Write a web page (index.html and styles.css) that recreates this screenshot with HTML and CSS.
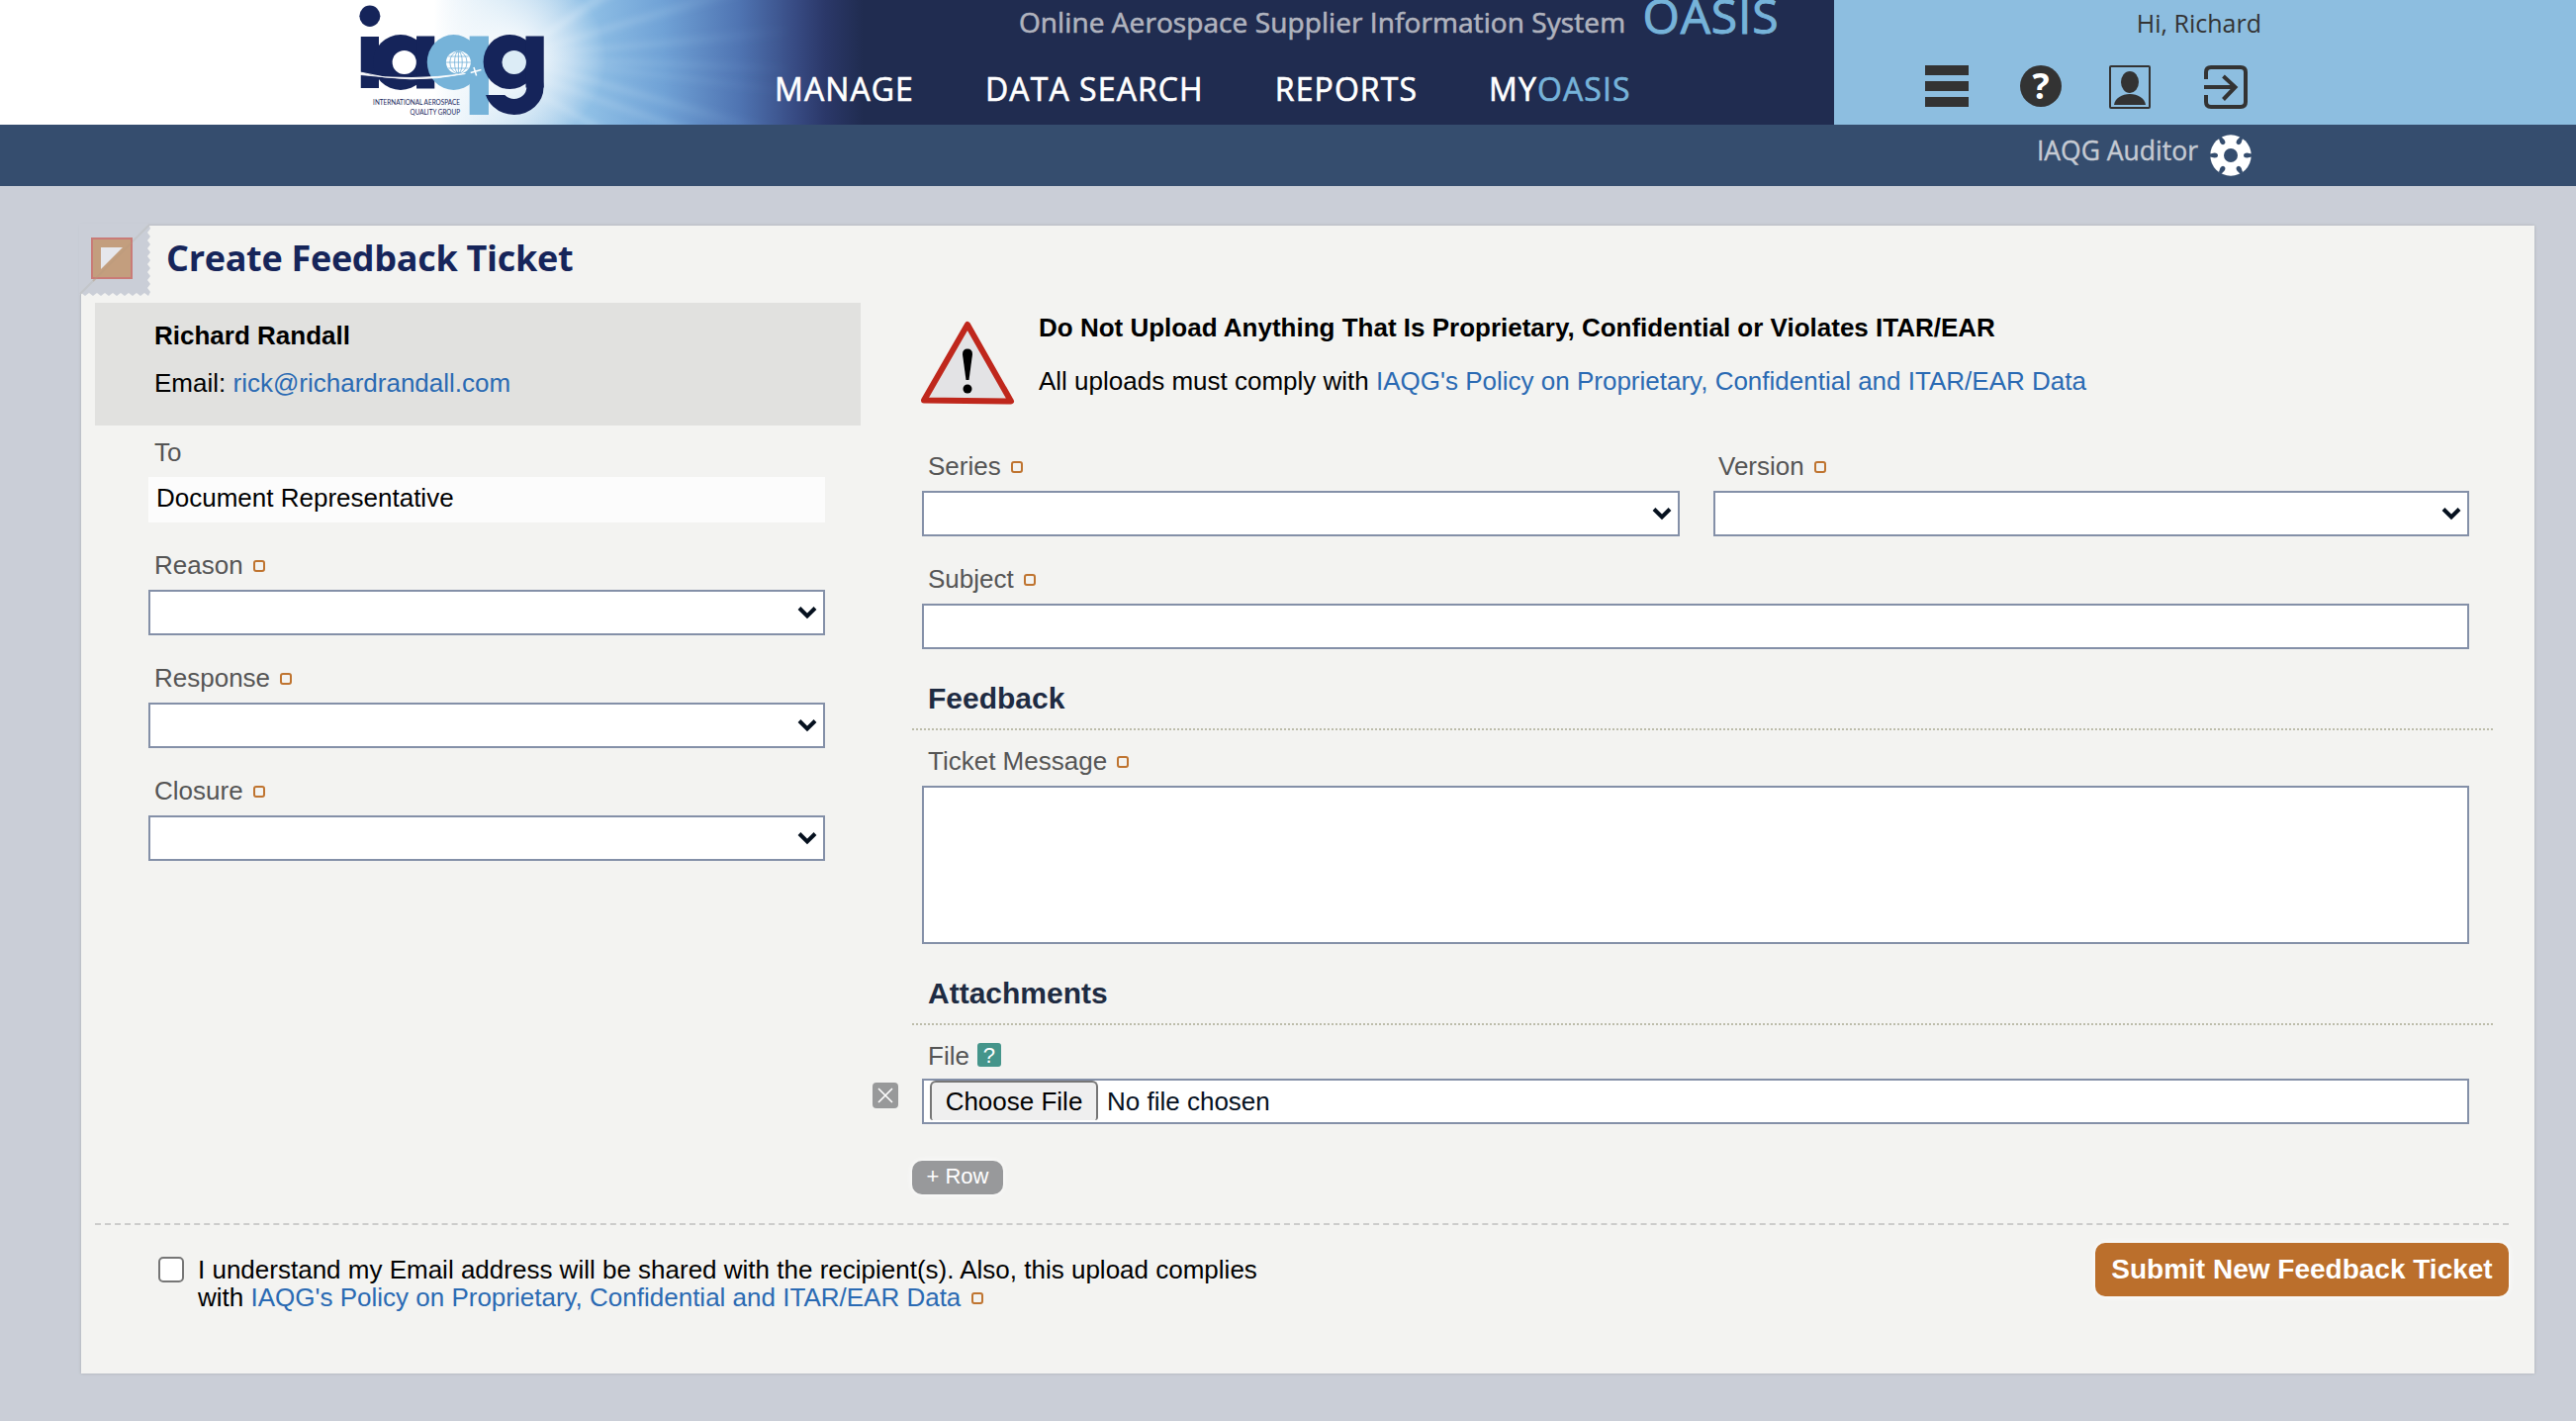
FILE: index.html
```html
<!DOCTYPE html>
<html lang="en">
<head>
    <meta charset="UTF-8">
    <meta name="viewport" content="width=device-width, initial-scale=1.0">
    <title>OASIS - Create Feedback Ticket</title>
    <link rel="stylesheet" href="styles.css">
</head>
<body>
    <header class="top">
        <!-- Sunburst behind the logo -->
        <svg class="glow" width="964" height="126" viewBox="0 0 900 126" preserveAspectRatio="none">
            <defs>
                <linearGradient id="sky" x1="0" x2="900" y1="0" y2="0" gradientUnits="userSpaceOnUse">
                    <stop offset="0.48" stop-color="#ffffff"/>
                    <stop offset="0.55" stop-color="#cfe5f4"/>
                    <stop offset="0.64" stop-color="#90c0e6"/>
                    <stop offset="0.72" stop-color="#70a2d6"/>
                    <stop offset="0.80" stop-color="#4f74b2"/>
                    <stop offset="0.86" stop-color="#374a82"/>
                    <stop offset="0.89" stop-color="#2b3869"/>
                    <stop offset="0.93" stop-color="#202c50"/>
                </linearGradient>
                <radialGradient id="sun" cx="505" cy="58" r="90" gradientUnits="userSpaceOnUse">
                    <stop offset="0" stop-color="#fff"/>
                    <stop offset="0.4" stop-color="#fff" stop-opacity="0.6"/>
                    <stop offset="1" stop-color="#fff" stop-opacity="0"/>
                </radialGradient>
                <linearGradient id="ray" x1="520" x2="770" y1="0" y2="0" gradientUnits="userSpaceOnUse">
                    <stop offset="0" stop-color="#fff" stop-opacity="0.35"/>
                    <stop offset="1" stop-color="#7ab4e0" stop-opacity="0"/>
                </linearGradient>
                <filter id="soft" x="-10%" y="-10%" width="120%" height="120%"><feGaussianBlur stdDeviation="3"/></filter>
            </defs>
            <rect width="900" height="126" fill="url(#sky)"/>
            <g fill="url(#ray)" filter="url(#soft)">
                <polygon points="505,58 800,22 800,34"/>
                <polygon points="505,58 700,-10 740,-10"/>
                <polygon points="505,58 590,-10 610,-10"/>
                <polygon points="505,58 800,66 800,76"/>
                <polygon points="505,58 800,92 800,100"/>
                <polygon points="505,58 760,130 720,130"/>
                <polygon points="505,70 690,134 665,134"/>
                <polygon points="505,80 595,130 583,130"/>
            </g>
            <rect width="900" height="126" fill="url(#sun)"/>
        </svg>
        <div class="logo">
            <svg width="193" height="126" viewBox="20 0 180 126" preserveAspectRatio="none">
                <defs>
                    <clipPath id="hook"><polygon points="138,96 168,96 168,80 197,80 197,118 138,118"/></clipPath>
                </defs>
                <g fill="#15245a">
                    <ellipse cx="32" cy="16.3" rx="9.8" ry="10.7"/>
                    <rect x="23.5" y="37" width="17" height="52"/>
                    <ellipse cx="61" cy="63" rx="26" ry="28"/>
                    <rect x="76" y="36.5" width="17" height="53"/>
                </g>
                <ellipse cx="64.5" cy="63" rx="11.3" ry="12" fill="#fff"/>
                <g fill="#76b3d9">
                    <ellipse cx="111" cy="63" rx="25" ry="28"/>
                    <rect x="126" y="36.5" width="18" height="79.5"/>
                </g>
                <g fill="#15245a">
                    <ellipse cx="164" cy="62.5" rx="25" ry="27.5"/>
                    <rect x="179" y="36.5" width="17" height="52"/>
                </g>
                <ellipse cx="168" cy="88" rx="19.8" ry="20" fill="none" stroke="#15245a" stroke-width="16" clip-path="url(#hook)"/>
                <ellipse cx="168" cy="63" rx="11.4" ry="12" fill="#dcecf6"/>
                <!-- globe -->
                <circle cx="115.5" cy="63" r="11.6" fill="#fff"/>
                <g fill="none" stroke="#76b3d9" stroke-width="0.8">
                    <ellipse cx="115.5" cy="63" rx="8" ry="11"/>
                    <ellipse cx="115.5" cy="63" rx="3.6" ry="11"/>
                    <line x1="115.5" y1="52" x2="115.5" y2="74"/>
                    <line x1="104" y1="63" x2="127" y2="63"/>
                    <line x1="106" y1="57" x2="125" y2="57"/>
                    <line x1="106" y1="69" x2="125" y2="69"/>
                </g>
                <!-- flight path and plane -->
                <path d="M23 73 Q68 86 122 74.5 Q70 82 23 75.5Z" fill="#fff" stroke="#fff" stroke-width="0.8"/>
                <path d="M127 73.5 L137 70.5 M130 68 L132.5 76.5" stroke="#fff" stroke-width="1.4"/>
                <g class="logo-text" fill="#15245a" text-anchor="end">
                    <text x="117" y="106" textLength="82" lengthAdjust="spacingAndGlyphs">INTERNATIONAL AEROSPACE</text>
                    <text x="117" y="115.7" textLength="47" lengthAdjust="spacingAndGlyphs">QUALITY GROUP</text>
                </g>
            </svg>
        </div>
        <div class="brand">
            <div class="tagline">Online Aerospace Supplier Information System <span class="oasis">OASIS</span></div>
            <nav>
                <a>MANAGE</a>
                <a>DATA SEARCH</a>
                <a>REPORTS</a>
                <a>MY<span class="blue">OASIS</span></a>
            </nav>
        </div>
        <div class="user">
            <div class="hi">Hi, Richard</div>
            <div class="icons">
                <svg width="44" height="44" viewBox="0 0 44 44" fill="#333"><path d="M0 0H44V10H0zM0 16H44V26H0zM0 32H44V42H0z"/></svg>
                <span class="help-circle">?</span>
                <svg width="42" height="44" viewBox="0 0 42 44" fill="#333">
                    <rect x="1" y="1" width="40" height="42" rx="1" fill="none" stroke="#333" stroke-width="2"/>
                    <ellipse cx="21" cy="17" rx="9" ry="11"/>
                    <path d="M5 40C6 33 13 29 21 29S36 33 37 40Z"/>
                </svg>
                <svg width="44" height="44" viewBox="0 0 44 44" fill="none" stroke="#333" stroke-width="4">
                    <path d="M2 14V7Q2 2 7 2H37Q42 2 42 7V37Q42 42 37 42H7Q2 42 2 37V30"/>
                    <path d="M0 22H31M19.5 11L31.5 22L19.5 34.5"/>
                </svg>
            </div>
        </div>
    </header>
    <div class="subbar">
        <span>IAQG Auditor</span>
        <svg width="42" height="42" viewBox="0 0 42 42">
            <circle cx="21" cy="21" r="20.7" fill="#fff"/>
            <g fill="#354d6e">
                <circle cx="21" cy="21" r="7"/>
                <path id="notch" d="M42 19.500L37.500 18.500Q34 18.500 34 21T37.500 23.500L42 22.500Z"/>
                <use href="#notch" transform="rotate(59 21 21)"/>
                <use href="#notch" transform="rotate(121 21 21)"/>
                <use href="#notch" transform="rotate(180 21 21)"/>
                <use href="#notch" transform="rotate(239 21 21)"/>
                <use href="#notch" transform="rotate(301 21 21)"/>
            </g>
        </svg>
    </div>

    <main class="panel">
        <!-- Taped corner -->
        <svg class="corner" width="74" height="76" viewBox="0 0 74 76">
            <path d="M0 0H70L72 5 69 9 72 13 69 17 72 21 69 25 72 29 69 33 72 37 69 41 72 45 69 49 72 53 69 57 72 61 69 65 72 69 70 73 66 70 62 73 58 70 54 73 50 70 46 73 42 70 38 73 34 70 30 73 26 70 22 73 18 70 14 73 10 70 6 73 2 70 0 73Z" fill="#caced7"/>
            <path d="M1 71L71 1" stroke="#c3c6ca" stroke-width="2"/>
            <rect x="13" y="15" width="40" height="40" fill="#c39e7e" stroke="#c97b77" stroke-width="2"/>
            <path d="M22 24H44L22 46Z" fill="#e6e7ec"/>
            <path d="M14 58L53 19" stroke="#b99a7c" stroke-width="2" opacity="0.4"/>
        </svg>
        <h1>Create Feedback Ticket</h1>

        <div class="row">
            <div class="side">
                <div class="person">
                    <b>Richard Randall</b>
                    <p>Email: <a>rick@richardrandall.com</a></p>
                </div>
                <div class="fields">
                    <div class="field">
                        <div class="label">To</div>
                        <div class="readonly">Document Representative</div>
                    </div>
                    <div class="field">
                        <div class="label">Reason <i class="req"></i></div>
                        <div class="select"><svg width="20" height="14" viewBox="0 0 20 14"><path d="M2 2.5L10 10.5L18 2.5"/></svg></div>
                    </div>
                    <div class="field">
                        <div class="label">Response <i class="req"></i></div>
                        <div class="select"><svg width="20" height="14" viewBox="0 0 20 14"><path d="M2 2.5L10 10.5L18 2.5"/></svg></div>
                    </div>
                    <div class="field">
                        <div class="label">Closure <i class="req"></i></div>
                        <div class="select"><svg width="20" height="14" viewBox="0 0 20 14"><path d="M2 2.5L10 10.5L18 2.5"/></svg></div>
                    </div>
                </div>
            </div>

            <div class="content">
                <div class="warning">
                    <svg width="96" height="88" viewBox="0 0 96 88">
                        <path d="M48 4L92 81.500L4 80.500Z" fill="#e3e3e5" stroke="#bf271c" stroke-width="6" stroke-linejoin="round"/>
                        <path d="M43 34Q43 28.500 48 28.500T53 34L49.500 60H46.500Z"/>
                        <circle cx="48" cy="69" r="4.500"/>
                    </svg>
                    <div>
                        <b>Do Not Upload Anything That Is Proprietary, Confidential or Violates ITAR/EAR</b>
                        <p>All uploads must comply with <a>IAQG's Policy on Proprietary, Confidential and ITAR/EAR Data</a></p>
                    </div>
                </div>
                <div class="inner two">
                    <div class="field">
                        <div class="label">Series <i class="req"></i></div>
                        <div class="select"><svg width="20" height="14" viewBox="0 0 20 14"><path d="M2 2.5L10 10.5L18 2.5"/></svg></div>
                    </div>
                    <div class="field">
                        <div class="label">Version <i class="req"></i></div>
                        <div class="select"><svg width="20" height="14" viewBox="0 0 20 14"><path d="M2 2.5L10 10.5L18 2.5"/></svg></div>
                    </div>
                </div>
                <div class="inner field">
                    <div class="label">Subject <i class="req"></i></div>
                    <input class="text" type="text">
                </div>
                <h2>Feedback</h2>
                <div class="inner field">
                    <div class="label">Ticket Message <i class="req"></i></div>
                    <textarea class="text message"></textarea>
                </div>
                <h2>Attachments</h2>
                <div class="inner attach">
                    <div class="label">File <span class="help">?</span></div>
                    <span class="remove"><svg width="18" height="18" viewBox="0 0 18 18"><path d="M2 2L16 16M16 2L2 16" stroke="#fff" stroke-width="1.600"/></svg></span>
                    <div class="file"><span class="choose">Choose File</span><span>No file chosen</span></div>
                </div>
                <button class="add">+ Row</button>
            </div>
        </div>

        <div class="footer">
            <label class="agree">
                <span class="check"></span>
                <span>I understand my Email address will be shared with the recipient(s). Also, this upload complies<br>with <a>IAQG's Policy on Proprietary, Confidential and ITAR/EAR Data</a> <i class="req"></i></span>
            </label>
            <button class="submit">Submit New Feedback Ticket</button>
        </div>
    </main>
</body>
</html>
```
FILE: styles.css
```css
* {
    box-sizing: border-box;
}

body {
    margin: 0;
    height: 1436px;
    overflow: hidden;
    background: #caced7;
    font-family: "Liberation Sans", Arial, sans-serif;
    font-size: 26px;
    line-height: 30px;
    color: #000;
}

p {
    margin: 0;
}

a {
    color: #2a6ab3;
    text-decoration: none;
}

/* Header */
.top {
    position: relative;
    display: flex;
    height: 126px;
    background: #202c50;
    font-family: "Open Sans", "Noto Sans", sans-serif;
}

.glow {
    position: absolute;
    left: -24px;
    top: 0;
}

.logo {
    position: relative;
    width: 783px;
    padding-left: 361px;
}

.logo-text {
    font-family: Lato, sans-serif;
    font-size: 7.5px;
}

.brand {
    position: relative;
    width: 1071px;
    -webkit-text-stroke: 0.6px;
}

.tagline {
    height: 66px;
    padding-left: 247px;
    line-height: 44px;
    font-size: 28px;
    letter-spacing: 0.08px;
    color: #b0b3be;
    white-space: nowrap;
}

.oasis {
    margin-left: 10px;
    font-size: 48px;
    line-height: 0;
    letter-spacing: 0.8px;
    vertical-align: -1px;
    color: #76b3d9;
    -webkit-text-stroke: 1px;
}

nav {
    display: flex;
    gap: 72px;
    line-height: 48px;
    font-size: 32px;
    letter-spacing: 1.1px;
    white-space: nowrap;
}

nav a {
    color: #fff;
}

.blue {
    color: #76b3d9;
}

.user {
    width: 750px;
    background: #8dbee0;
    color: #333;
}

.hi {
    height: 66px;
    padding-right: 318px;
    text-align: right;
    font-size: 25px;
    line-height: 46px;
}

.icons {
    display: flex;
    align-items: flex-start;
    padding-left: 92px;
}

.help-circle {
    width: 42px;
    height: 42px;
    margin: 0 48px 0 52px;
    border-radius: 50%;
    background: #333;
    color: #fff;
    font-size: 36px;
    font-weight: bold;
    line-height: 42px;
    text-align: center;
}

.icons svg:last-child {
    margin-left: 54px;
}

.subbar {
    display: flex;
    justify-content: flex-end;
    height: 62px;
    padding-right: 328px;
    background: #354d6e;
    color: #c5cad3;
    font-family: "Open Sans", "Noto Sans", sans-serif;
    font-size: 26.5px;
    line-height: 53px;
    -webkit-text-stroke: 0.4px;
}

.subbar svg {
    margin: 10px 0 0 12px;
}

/* Panel */
.panel {
    position: relative;
    width: 2480px;
    height: 1160px;
    margin: 40px 0 0 82px;
    background: #f3f3f1;
    box-shadow: 0 0 3px #a9adb3;
}

.corner {
    position: absolute;
    left: -2px;
    top: -2px;
}

h1 {
    margin: 0;
    height: 78px;
    padding-left: 86px;
    font-family: "Open Sans", "Noto Sans", sans-serif;
    font-size: 36px;
    line-height: 66px;
    letter-spacing: -0.3px;
    color: #16255a;
}

.row {
    display: flex;
    gap: 52px;
    height: 930px;
    padding-left: 14px;
}

.side {
    width: 774px;
}

.person {
    height: 124px;
    padding: 18px 60px;
    background: #e1e1df;
}

.person p {
    margin-top: 18px;
}

.fields {
    padding: 12px 36px 0 54px;
}

.field {
    margin-bottom: 28px;
}

.label {
    height: 40px;
    padding-left: 6px;
    color: #555;
}

.req {
    display: inline-block;
    width: 12px;
    height: 12px;
    margin-left: 3px;
    border: 2px solid #bf7430;
    border-radius: 3px;
    vertical-align: 2px;
}

.readonly {
    height: 46px;
    padding-left: 8px;
    background: #fcfcfc;
    line-height: 43px;
}

.select,
.text,
.file {
    display: flex;
    width: 100%;
    height: 46px;
    border: 2px solid #8490a8;
    border-radius: 0;
    background: #fff;
}

.select {
    align-items: flex-start;
    justify-content: flex-end;
    padding: 14px 6px 0 0;
}

.select path {
    fill: none;
    stroke: #05101e;
    stroke-width: 4;
}

.text {
    outline: none;
    resize: none;
}

.message {
    height: 160px;
}

.content {
    width: 1598px;
}

.warning {
    display: flex;
    gap: 24px;
    height: 150px;
    padding: 10px 0 0 8px;
}

.warning svg {
    margin-top: 8px;
}

.warning p {
    margin-top: 24px;
}

.inner {
    padding: 0 24px 0 10px;
}

.two {
    display: grid;
    grid-template-columns: 766px 764px;
    gap: 34px;
}

.two .field:last-child .label {
    padding-left: 5px;
}

h2 {
    margin: 0 0 16px;
    padding: 5px 0 13px 16px;
    background: repeating-linear-gradient(90deg, #bcbcaa 0 2px, transparent 2px 4px) bottom / 100% 2px no-repeat;
    font-size: 30px;
    line-height: 34px;
    height: 54px;
    color: #1e2b42;
}

.attach {
    position: relative;
    height: 120px;
}

.attach .label {
    display: flex;
    height: 38px;
}

.help {
    width: 24px;
    height: 24px;
    margin: 2px 0 0 8px;
    border-radius: 3px;
    background: #45958b;
    color: #fff;
    font-size: 22px;
    line-height: 25px;
    text-align: center;
}

.remove {
    position: absolute;
    left: -40px;
    top: 42px;
    display: flex;
    padding: 4px;
    border-radius: 4px;
    background: #98999a;
}

.file {
    padding-left: 6px;
    line-height: 42px;
    color: #05101e;
}

.choose {
    height: 40px;
    width: 170px;
    margin-right: 9px;
    border: 2px solid #767676;
    border-bottom: 0;
    border-radius: 6px 6px 3px 3px;
    background: #efefef;
    color: #000;
    text-align: center;
    line-height: 38px;
}

button {
    border: 0;
    border-radius: 10px;
    font-family: inherit;
    color: #fff;
    box-shadow: 0 0 6px #fff;
}

.add {
    width: 92px;
    height: 34px;
    padding: 0 0 2px;
    background: #98999b;
    font-size: 22px;
}

.footer {
    display: flex;
    justify-content: space-between;
    align-items: flex-start;
    width: 2440px;
    margin-left: 14px;
    border-top: 2px dashed #cccccb;
}

.agree {
    display: flex;
    gap: 14px;
    padding: 31px 0 0 64px;
    line-height: 28px;
}

.check {
    width: 26px;
    height: 26px;
    margin-top: 1px;
    border: 2px solid #767676;
    border-radius: 5px;
    background: #fff;
}

.submit {
    width: 418px;
    height: 54px;
    margin-top: 18px;
    padding: 0;
    background: #bb6f2c;
    font-size: 28px;
    font-weight: bold;
}
```
